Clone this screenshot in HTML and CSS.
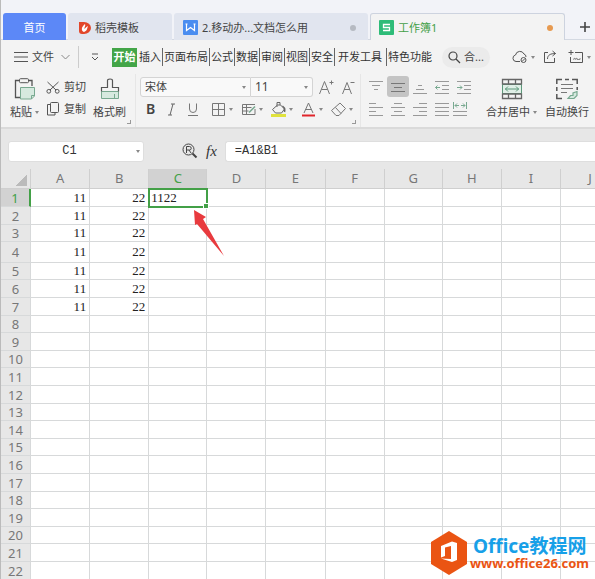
FILE: index.html
```html
<!DOCTYPE html>
<html lang="zh-CN">
<head>
<meta charset="utf-8">
<title>工作簿1</title>
<link rel="stylesheet" href="styles.css">
</head>
<body>
<div class="app">
<nav class="tabs">
  <button class="tab tab-home">首页</button>
  <button class="tab tab-store"><svg width="12" height="14" viewBox="0 0 12 14"><path d="M0 1h5a7 6 0 0 1 0 12H3a3 3 0 0 1-3-3z" fill="#e2472b"/><path d="M6 3c1 2-1 3-.5 5 1-1 1.500-2 3.500-3-1 3-1 5-4 6-3-1-3-5 1-8z" fill="#fff"/></svg><span>稻壳模板</span></button>
  <button class="tab tab-doc"><svg width="15" height="15" viewBox="0 0 15 15"><rect width="15" height="15" rx="1" fill="#4a8df0"/><path d="M2.500 4h2M10.500 4h2M3.500 4v6.500l4-3 4 3V4" fill="none" stroke="#fff" stroke-width="1.200"/></svg><span>2.移动办...文档怎么用</span><i class="dot"></i></button>
  <button class="tab tab-book"><svg width="15" height="15" viewBox="0 0 15 15"><rect width="15" height="15" rx="1" fill="#2ebc78"/><path d="M11 4.500H4.500v3h6v3H4" fill="none" stroke="#fff" stroke-width="1.300"/></svg><span>工作簿1</span><i class="dot dot-orange"></i></button>
  <button class="tab-add" aria-label="新建"><svg width="12" height="12" viewBox="0 0 12 12"><path d="M6 1v10M1 6h10" stroke="#444" stroke-width="1.600"/></svg></button>
</nav>
<header class="menu">
  <button class="file"><svg width="14" height="12" viewBox="0 0 14 12"><path d="M0 1.500h14M0 6h14M0 10.500h14" stroke="#555"/></svg><span>文件</span><svg width="9" height="6" viewBox="0 0 9 6"><path d="M.5 1l4 4 4-4" fill="none" stroke="#888"/></svg></button>
  <button class="quick" aria-label="快速访问"><svg width="8" height="8" viewBox="0 0 8 8"><path d="M1 1h6M1 4l3 3 3-3" fill="none" stroke="#555"/></svg></button>
  <button class="item active">开始</button><button class="item">插入</button><button class="item">页面布局</button><button class="item">公式</button><button class="item">数据</button><button class="item">审阅</button><button class="item">视图</button><button class="item">安全</button><button class="item dev">开发工具</button><button class="item last">特色功能</button>
  <label class="search"><svg width="13" height="13" viewBox="0 0 13 13"><circle cx="5" cy="5" r="4" fill="none" stroke="#444" stroke-width="1.200"/><path d="M8 8l4 4" stroke="#444" stroke-width="1.300"/></svg><input aria-label="搜索" value="合..."></label>
  <div class="actions">
    <button class="drop" aria-label="云"><svg width="16" height="14" viewBox="0 0 16 14"><path d="M8 11.500H4a3.300 3.300 0 0 1-.5-6.500 4.500 4.500 0 0 1 8.500-1 3 3 0 0 1 2 3" fill="none" stroke="#555"/><circle cx="11.500" cy="10" r="2.500" fill="#f3f3f3" stroke="#555"/><path d="M10 11.500l3-3" stroke="#555"/></svg><i class="caret"></i></button>
    <button class="share" aria-label="分享"><svg width="14" height="14" viewBox="0 0 14 14"><path d="M5 2.500H1.500v10h10V8M4.500 9c0-4 3-5.500 8-5.500M9.500 1l3 2.500-3 2.500" fill="none" stroke="#555"/></svg></button>
    <button class="drop" aria-label="批注"><svg width="16" height="14" viewBox="0 0 16 14"><path d="M7 2.500h7.500v10h-12V7M.5 2.500h5M3 0v5" fill="none" stroke="#555"/><path d="M5 9.500l2-1.500v1.500L9 8v1.500h3V8" fill="none" stroke="#888"/></svg><i class="caret"></i></button>
  </div>
</header>
<section class="ribbon">
  <div class="group clipboard">
    <button class="big paste"><svg width="22" height="22" viewBox="0 0 22 22"><path d="M5 2.500H1.500v17H6M15 2.500h3V8" fill="none" stroke="#555" stroke-width="1.300"/><rect x="5.500" y=".7" width="9" height="4" rx="1" fill="#f3f3f3" stroke="#555"/><path d="M6.500 9.500h14V18l-3 3h-11z" fill="#d6e9df" stroke="#78a990"/><path d="M20.500 17.500h-3V21" fill="none" stroke="#78a990"/></svg><span>粘贴<i class="caret"></i></span></button>
    <div class="stack">
      <button><svg width="14" height="13" viewBox="0 0 14 13"><path d="M1.500 1l8.500 8M12.500 1L4 9" stroke="#555"/><circle cx="2.800" cy="10.300" r="1.900" fill="none" stroke="#555"/><circle cx="11.200" cy="10.300" r="1.900" fill="none" stroke="#555"/></svg><span>剪切</span></button>
      <button><svg width="14" height="14" viewBox="0 0 14 14"><rect x="4.500" y=".5" width="8" height="10" rx="1" fill="none" stroke="#555"/><path d="M4 2.500H1.500v10.500h7.500V11" fill="none" stroke="#555"/></svg><span>复制</span></button>
    </div>
    <button class="big"><svg width="20" height="22" viewBox="0 0 20 22"><path d="M1.500 13.500h17v7h-17z" fill="#d6e9df" stroke="#78a990"/><path d="M1.500 13.500V9.500h6v-7q0-1.500 2.500-1.500t2.500 1.500v7h6v4" fill="none" stroke="#555" stroke-width="1.200"/><path d="M14.500 20v-4" stroke="#78a990"/></svg><span>格式刷</span></button>
    <i class="corner"></i>
  </div>
  <div class="group font">
    <div class="selects">
      <span class="pick family"><select aria-label="字体"><option>宋体</option></select><i class="caret"></i></span><span class="pick size"><select aria-label="字号"><option>11</option></select><i class="caret"></i></span>
      <button aria-label="增大字号"><svg width="15" height="15" viewBox="0 0 15 15"><path d="M.5 14L5.500 1.500l5 12.500M2.500 9.500h6M10.500 2.500h4M12.500.5v4" fill="none" stroke="#777"/></svg></button>
      <button aria-label="减小字号"><svg width="15" height="15" viewBox="0 0 15 15"><path d="M1.500 14L6 2.500 10.500 14M3 9.500h6M9.500 2.500h4" fill="none" stroke="#777"/></svg></button>
    </div>
    <div class="styles">
      <button class="glyph"><b>B</b></button><button class="glyph" aria-label="倾斜"><svg width="15" height="15" viewBox="0 0 15 15"><path d="M7 2h4M4 13h4M9 2L6 13" fill="none" stroke="#666"/></svg></button><button class="glyph" aria-label="下划线"><svg width="15" height="15" viewBox="0 0 15 15"><path d="M4.500 1.500V7a3.500 3.500 0 0 0 7 0V1.500M3 13.500h10" fill="none" stroke="#777"/></svg></button>
      <button class="drop" aria-label="边框"><svg width="15" height="15" viewBox="0 0 15 15"><path d="M1.500 1.500h12v12h-12zM7.500 1.500v12M1.500 7.500h12" fill="none" stroke="#777"/></svg><i class="caret"></i></button>
      <button class="drop" aria-label="表格样式"><svg width="15" height="15" viewBox="0 0 15 15"><path d="M14 7v5.500H1.500v-10H14M1.500 5.500h9M1.500 9h6M5.500 2.500v10" fill="none" stroke="#777"/><path d="M8 10.500l6-6" stroke="#78a990" stroke-width="1.600"/></svg><i class="caret"></i></button>
      <button class="drop" aria-label="填充颜色"><svg width="15" height="15" viewBox="0 0 15 15"><path d="M6.500 3h3l4 4-3 4h-6l-3-3.500zM6 5V.5h3V3" fill="none" stroke="#666"/><path d="M11.500 4q3 2 2 6" fill="none" stroke="#666" stroke-width="1.500"/><path d="M0 13.500h15" stroke="#e0e23c" stroke-width="3"/></svg><i class="caret"></i></button>
      <button class="drop" aria-label="字体颜色"><svg width="15" height="15" viewBox="0 0 15 15"><path d="M3 11L7.500 1 12 11M4.500 7.500h6" fill="none" stroke="#777"/><path d="M1 13.500h13" stroke="#e0252b" stroke-width="2"/></svg><i class="caret"></i></button>
      <button class="drop" aria-label="清除"><svg width="15" height="15" viewBox="0 0 15 15"><path d="M.5 8.500L9 1l5.500 5.500L8 13.500H5zM4.500 5.500l5.500 6" fill="none" stroke="#777"/></svg><i class="caret"></i></button>
    </div>
    <i class="corner"></i>
  </div>
  <div class="group align">
    <button aria-label="顶端对齐"><svg width="14" height="14" viewBox="0 0 14 14"><path d="M0 1.500h14M3 5.500h8M5 9.500h4"/></svg></button>
    <button class="on" aria-label="垂直居中"><svg width="14" height="14" viewBox="0 0 14 14"><path d="M0 3.500h14M3 7.500h8M0 11.500h14"/></svg></button>
    <button aria-label="底端对齐"><svg width="14" height="14" viewBox="0 0 14 14"><path d="M5 5.500h4M3 9.500h8M0 13.500h14"/></svg></button>
    <button aria-label="减少缩进"><svg width="14" height="14" viewBox="0 0 14 14"><path d="M0 1.500h14M7 5.500h7M7 9.500h7M0 13.500h14"/><path class="arrow" d="M5 7.500H.5M2.500 5.500l-2 2 2 2"/></svg></button>
    <button aria-label="增加缩进"><svg width="14" height="14" viewBox="0 0 14 14"><path d="M0 1.500h14M7 5.500h7M7 9.500h7M0 13.500h14"/><path class="arrow" d="M0 7.500h5M3 5.500l2 2-2 2"/></svg></button>
    <button aria-label="左对齐"><svg width="14" height="14" viewBox="0 0 14 14"><path d="M0 1.500h7M0 5.500h14M0 9.500h7M0 13.500h14"/></svg></button>
    <button aria-label="居中"><svg width="14" height="14" viewBox="0 0 14 14"><path d="M3 1.500h8M0 5.500h14M3 9.500h8M0 13.500h14"/></svg></button>
    <button aria-label="右对齐"><svg width="14" height="14" viewBox="0 0 14 14"><path d="M6 1.500h8M0 5.500h14M6 9.500h8M0 13.500h14"/></svg></button>
    <button aria-label="两端对齐"><svg width="14" height="14" viewBox="0 0 14 14"><path d="M0 1.500h14M0 5.500h14M0 9.500h14M0 13.500h14"/></svg></button>
    <button class="spread" aria-label="分散对齐"><svg width="14" height="14" viewBox="0 0 14 14"><path d="M0 9.500h14M0 13.500h14"/><path class="arrow" d="M.5 0v7M13.500 0v7M2 3.500h4M8 3.500h4M4 1.500l-2 2 2 2M10 1.500l2 2-2 2"/></svg></button>
  </div>
  <div class="group merge">
    <button class="big"><svg width="22" height="22" viewBox="0 0 22 22"><path d="M1.500 6.500h19v9h-19z" fill="#e0efe7" stroke="#5c987a"/><path d="M1.500 6V1.500h19V6zM1.500 16v4.500h19V16zM7.500 1.500V6M14.500 1.500V6M7.500 16v4.500M14.500 16v4.500" fill="none" stroke="#666" stroke-width="1.300"/><path d="M4 11h14M7 8.500L4.500 11 7 13.500M15 8.500l2.500 2.500-2.500 2.500" fill="none" stroke="#5c987a"/></svg><span>合并居中<i class="caret"></i></span></button>
    <button class="big"><svg width="22" height="22" viewBox="0 0 22 22"><path d="M.8 6V1.500H6M9 1.500h4M16 1.500h5.200V6M.8 9v4M.8 16v4.500H6M21.200 9v3" fill="none" stroke="#555" stroke-width="1.500"/><path d="M5 6.500h12M5 10.500h12M5 14.500h6" stroke="#777"/><path d="M21 13.500v4l-3 3h-6l2.500-3H17v-2.500z" fill="#d6e9df" stroke="#78a990" stroke-width="1.200"/></svg><span>自动换行</span></button>
  </div>
</section>
<section class="formula">
  <label class="name"><input aria-label="名称框" value="C1"><i class="caret"></i></label>
  <svg class="lens" width="16" height="16" viewBox="0 0 16 16"><circle cx="6.500" cy="6.500" r="5.500" fill="none" stroke="#444"/><path d="M4.500 10V3.500h3a1.500 1.500 0 0 1 0 3.500H4.500M7 7l2 3" fill="none" stroke="#444"/><path d="M10.500 10.500l4 4" stroke="#444" stroke-width="2"/></svg>
  <span class="fx">fx</span>
  <input class="expr" aria-label="编辑栏" value="=A1&amp;B1">
</section>
<main class="sheet">
<table>
<thead><tr><th class="all"></th><th>A</th><th>B</th><th class="sel">C</th><th>D</th><th>E</th><th>F</th><th>G</th><th>H</th><th>I</th><th>J</th></tr></thead>
<tbody>
<tr><th class="sel">1</th><td>11</td><td>22</td><td class="cursor">1122<i class="handle"></i><svg class="pointer" width="32" height="48" viewBox="0 0 32 48"><path d="M0 0l12 7-3 2 21 37L3 14l-2 1z" fill="#e83a3e"/></svg></td><td></td><td></td><td></td><td></td><td></td><td></td><td></td></tr>
<tr><th>2</th><td>11</td><td>22</td><td></td><td></td><td></td><td></td><td></td><td></td><td></td><td></td></tr>
<tr><th>3</th><td>11</td><td>22</td><td></td><td></td><td></td><td></td><td></td><td></td><td></td><td></td></tr>
<tr class="tall"><th>4</th><td>11</td><td>22</td><td></td><td></td><td></td><td></td><td></td><td></td><td></td><td></td></tr>
<tr><th>5</th><td>11</td><td>22</td><td></td><td></td><td></td><td></td><td></td><td></td><td></td><td></td></tr>
<tr><th>6</th><td>11</td><td>22</td><td></td><td></td><td></td><td></td><td></td><td></td><td></td><td></td></tr>
<tr><th>7</th><td>11</td><td>22</td><td></td><td></td><td></td><td></td><td></td><td></td><td></td><td></td></tr>
<tr><th>8</th><td></td><td></td><td></td><td></td><td></td><td></td><td></td><td></td><td></td><td></td></tr>
<tr><th>9</th><td></td><td></td><td></td><td></td><td></td><td></td><td></td><td></td><td></td><td></td></tr>
<tr><th>10</th><td></td><td></td><td></td><td></td><td></td><td></td><td></td><td></td><td></td><td></td></tr>
<tr><th>11</th><td></td><td></td><td></td><td></td><td></td><td></td><td></td><td></td><td></td><td></td></tr>
<tr><th>12</th><td></td><td></td><td></td><td></td><td></td><td></td><td></td><td></td><td></td><td></td></tr>
<tr><th>13</th><td></td><td></td><td></td><td></td><td></td><td></td><td></td><td></td><td></td><td></td></tr>
<tr><th>14</th><td></td><td></td><td></td><td></td><td></td><td></td><td></td><td></td><td></td><td></td></tr>
<tr><th>15</th><td></td><td></td><td></td><td></td><td></td><td></td><td></td><td></td><td></td><td></td></tr>
<tr><th>16</th><td></td><td></td><td></td><td></td><td></td><td></td><td></td><td></td><td></td><td></td></tr>
<tr><th>17</th><td></td><td></td><td></td><td></td><td></td><td></td><td></td><td></td><td></td><td></td></tr>
<tr><th>18</th><td></td><td></td><td></td><td></td><td></td><td></td><td></td><td></td><td></td><td></td></tr>
<tr><th>19</th><td></td><td></td><td></td><td></td><td></td><td></td><td></td><td></td><td></td><td></td></tr>
<tr><th>20</th><td></td><td></td><td></td><td></td><td></td><td></td><td></td><td></td><td></td><td></td></tr>
<tr><th>21</th><td></td><td></td><td></td><td></td><td></td><td></td><td></td><td></td><td></td><td></td></tr>
<tr><th>22</th><td></td><td></td><td></td><td></td><td></td><td></td><td></td><td></td><td></td><td></td></tr>
</tbody>
</table>
<a class="brand" href="#"><svg width="36" height="44" viewBox="0 0 36 44"><path d="M18 0l18 11v22L18 44 0 33V11z" fill="#ea5413"/><path d="M10 15l11-4.500 5 1.500v17l-5 2-11-3.500 10 .5V15l-6 1.500V25l-4 1.500z" fill="#fff"/></svg><span class="words"><span class="title">Office教程网</span><span class="url">www.office26.com</span></span></a>
</main>
</div>
</body>
</html>
```
FILE: styles.css
```css
* { box-sizing: border-box; }
body {
  margin: 0;
  overflow: hidden;
  background: #fff;
  color: #444;
  font: 11px/16px "Noto Sans", "Noto Sans CJK SC", sans-serif;
}
.app { border-left: 1px solid #bbb; }
button, input, select {
  margin: 0;
  padding: 0;
  border: 0;
  background: none;
  color: inherit;
  font: inherit;
  white-space: nowrap;
  appearance: none;
  outline: 0;
  min-width: 0;
}
svg { display: block; flex: none; }
.caret {
  flex: none;
  display: inline-block;
  border: 2px solid transparent;
  border-top: 3px solid #888;
  border-bottom: 0;
}
.drop { display: flex; align-items: center; gap: 3px; }

/* document tabs */
.tabs {
  display: flex;
  height: 40px;
  padding: 13px 0 0 2px;
  background: #f2f3f8;
  border-bottom: 1px solid #d4d9e2;
}
.tab {
  display: flex;
  align-items: center;
  gap: 4px;
  height: 27px;
  margin-right: 2px;
  padding: 2px 9px 0;
  border-radius: 3px 3px 0 0;
  background: #e1e5ef;
}
.tab-home { width: 63px; justify-content: center; background: #5c88f7; color: #fff; }
.tab-store { width: 104px; padding-left: 11px; }
.tab-doc { width: 194px; }
.tab-book {
  width: 195px;
  padding: 1px 11px 0 8px;
  border: 1px solid #cdd3df;
  border-bottom: 0;
  background: #f3f3f3;
  color: #43a047;
}
.dot { width: 6px; height: 6px; margin-left: auto; border-radius: 50%; background: #b6bac2; }
.tab-doc { padding-right: 12px; }
.dot-orange { background: #e79a50; }
.tab-add { padding: 2px 0 0 12px; }

/* menu bar */
.menu {
  display: flex;
  align-items: center;
  height: 34px;
  background: #f3f3f3;
}
.file {
  display: flex;
  align-items: center;
  gap: 4px;
  width: 78px;
  height: 22px;
  padding-left: 13px;
  border-right: 1px solid #ccc;
}
.file svg:last-child { margin-left: 3px; }
.quick { width: 33px; padding-left: 12px; }
.item { height: 18px; padding: 0 1px; border-right: 1px solid #666; color: #333; }
.item.active {
  width: 25px;
  height: 19px;
  margin-right: 1px;
  border: 0;
  background: #43a548;
  color: #fff;
  font-weight: bold;
}
.item.dev { padding: 0 4px 0 3px; }
.item.last { border: 0; }
.search {
  display: flex;
  align-items: center;
  gap: 3px;
  width: 48px;
  height: 21px;
  margin-left: 9px;
  padding-left: 6px;
  border-radius: 11px;
  background: #ebebeb;
}
.search input { width: 24px; }
.actions { display: flex; align-items: center; gap: 8px; margin-left: 22px; }
.share { margin-right: 3px; }

/* ribbon */
.ribbon {
  display: flex;
  height: 55px;
  background: #f3f3f3;
  border-bottom: 2px solid #dadada;
}
.group { position: relative; display: flex; flex: none; }
.group button { display: flex; align-items: center; justify-content: center; }
.group .big { flex-direction: column; justify-content: flex-start; gap: 4px; }
.big span { display: flex; align-items: center; gap: 3px; }
.corner {
  position: absolute;
  right: 4px;
  bottom: 3px;
  width: 4px;
  height: 4px;
  border: solid #999;
  border-width: 0 1px 1px 0;
}
.clipboard { width: 135px; padding: 4px 0 0 9px; gap: 7px; border-right: 1px solid #e6e6e6; }
.stack { display: flex; flex-direction: column; gap: 6px; padding-top: 1px; }
.group .stack button { gap: 4px; }
.font { width: 225px; flex-direction: column; padding: 3px 0 0 4px; gap: 2px; border-right: 1px solid #e6e6e6; }
.selects, .styles { display: flex; align-items: center; height: 20px; }
.selects button { width: 22px; height: 20px; }
.pick {
  display: flex;
  align-items: center;
  height: 20px;
  padding: 0 4px;
  border: 1px solid #d4d4d4;
  background: #f9f9f9;
}
.pick select { flex: 1; }
.family { width: 111px; border-radius: 3px 0 0 3px; }
.size { width: 62px; margin-right: 2px; border-left: 0; border-radius: 0 3px 3px 0; }
.size select { font-size: 12px; }
.glyph { width: 21px; font-size: 14px; line-height: 20px; }
.glyph b { font-weight: 600; }
.styles .drop { width: 30px; }
.glyph + .drop { margin-left: 4px; }
.align {
  display: grid;
  grid-template-columns: repeat(5, 22px);
  grid-auto-rows: 21px;
  row-gap: 1px;
  padding: 2px 0 0 4px;
}
.group.align button { width: 22px; height: 21px; }
.align path { fill: none; stroke: #999; }
.align .arrow { stroke: #78a990; }
.align .on { border-radius: 3px; background: #c4c4c4; }
.align .on path { stroke: #777; }
.align .spread { justify-content: flex-start; }
.merge { padding: 4px 0 0 11px; gap: 8px; }

/* formula bar */
.formula {
  display: flex;
  align-items: center;
  height: 40px;
  padding: 4px 0 0 7px;
  background: #e7e7e7;
  color: #333;
}
.name, .expr { height: 21px; border: 1px solid #dedede; border-radius: 3px; background: #fff; }
.name { display: flex; align-items: center; width: 136px; padding-right: 3px; }
.name input { flex: 1; padding-right: 6px; text-align: center; }
.name input, .expr { font: 12px/18px "Liberation Mono", monospace; }
.lens { margin-left: 38px; }
.fx { margin: 0 8px 0 8px; font: italic 15px/20px "Liberation Serif", serif; }
.expr { flex: 1; padding-left: 9px; border-right: 0; border-radius: 3px 0 0 3px; }

/* worksheet */
.sheet { position: relative; overflow: hidden; }
table { width: 619px; table-layout: fixed; border-collapse: separate; border-spacing: 0; }
th, td { padding: 0; border: solid #d7d9da; border-width: 0 1px 1px 0; }
th { background: #e7e7e7; color: #777; font-size: 13px; line-height: 16px; font-weight: normal; }
thead th { width: 59px; height: 20px; line-height: 19px; border-color: #cfcfcf; }
thead th:first-child { width: 30px; }
thead th:nth-child(4n) { width: 58px; }
th.sel { background: #d2d2d2; color: #43a047; }
thead .sel { border-bottom-color: #43a047; }
tbody .sel { border-right: 2px solid #43a047; }
.all { background: linear-gradient(135deg, transparent 50%, #bbb 50%) 15px 6px / 11px 11px no-repeat #e7e7e7; }
tbody tr { height: 18px; }
tbody tr:nth-child(5n + 3), tbody tr:nth-child(5n) { height: 17px; }
tbody tr.tall { height: 21px; }
td { padding-right: 3px; color: #222; font: 13px/16px "Liberation Serif", serif; text-align: right; }
.cursor { position: relative; padding: 0 0 0 2px; text-align: left; outline: 2px solid #43a047; outline-offset: -1px; }
.handle { position: absolute; right: -2px; bottom: -2px; width: 4px; height: 4px; background: #43a047; outline: 1px solid #fff; }
.pointer { position: absolute; left: 45px; top: 21px; z-index: 1; }

.brand {
  position: absolute;
  right: 6px;
  bottom: 5px;
  display: flex;
  align-items: center;
  gap: 3px;
  text-decoration: none;
}
.words { display: flex; flex-direction: column; font-weight: bold; }
.title { padding-left: 3px; color: #17a0e8; font-size: 19px; line-height: 20px; }
.url { color: #ea5413; font-size: 13px; line-height: 14px; }
```
